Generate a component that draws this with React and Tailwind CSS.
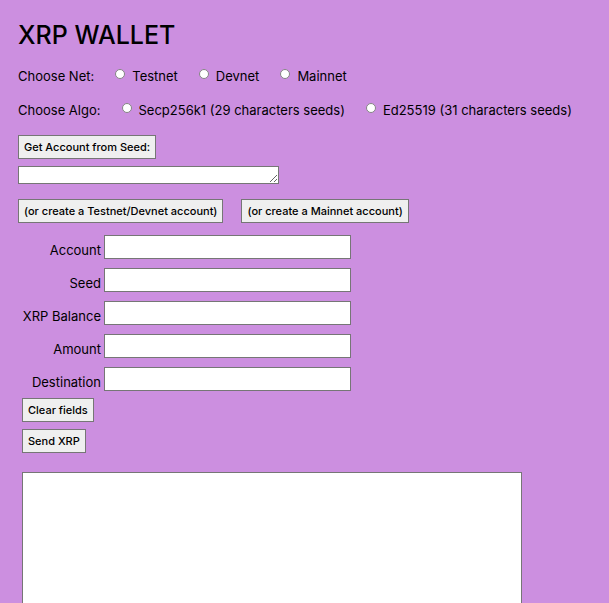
const networks = ["Testnet", "Devnet", "Mainnet"];
const algorithms = ["Secp256k1 (29 characters seeds)", "Ed25519 (31 characters seeds)"];
const fields = ["Account", "Seed", "XRP Balance", "Amount", "Destination"];

function Radio({ name, label }) {
  return (
    <label className="flex items-center gap-[7px]">
      <input
        type="radio"
        name={name}
        value={label}
        className="mb-1 size-[10px] shrink-0 appearance-none rounded-full border border-[#858585] bg-white checked:border-[3px] checked:border-[#0075ff]"
      />
      {label}
    </label>
  );
}

function RadioRow({ title, name, options }) {
  return (
    <div role="radiogroup" aria-label={title} className="flex flex-wrap items-center gap-x-[21px] leading-5">
      <span>{title}</span>
      {options.map((option) => (
        <Radio key={option} name={name} label={option} />
      ))}
    </div>
  );
}

function Button({ children }) {
  return (
    <button
      type="button"
      className="h-6 whitespace-nowrap border border-[#767676] bg-[#efefef] px-[5px] text-[11px] font-medium leading-4"
    >
      {children}
    </button>
  );
}

export default function App() {
  return (
    <main className="min-h-screen bg-[#cc8fe0] px-[18px] pt-[19px] pb-5 font-['Inter','Liberation_Sans',sans-serif] text-[13px] text-black">
      <h1 className="text-[25px] font-medium leading-8">XRP WALLET</h1>
      <div className="mt-[15px] flex flex-col gap-[14px]">
        <RadioRow title="Choose Net:" name="network" options={networks} />
        <RadioRow title="Choose Algo:" name="algorithm" options={algorithms} />
      </div>
      <div className="mt-[15px] flex flex-col items-start gap-[7px]">
        <Button>Get Account from Seed:</Button>
        <textarea
          aria-label="Account seed"
          rows={1}
          className="block h-[18px] w-[261px] border border-[#767676] bg-white px-1 text-[11px] leading-4"
        />
      </div>
      <div className="mt-[15px] flex flex-wrap gap-[18px]">
        <Button>(or create a Testnet/Devnet account)</Button>
        <Button>(or create a Mainnet account)</Button>
      </div>
      <div className="mt-3 flex flex-col gap-[9px]">
        {fields.map((field) => (
          <div key={field} className="flex h-6 items-end gap-[3px]">
            <label htmlFor={field} className="w-[83px] whitespace-nowrap text-right leading-[18px]">
              {field}
            </label>
            <input
              id={field}
              type="text"
              className="h-6 w-[247px] border border-[#767676] bg-white px-1"
            />
          </div>
        ))}
      </div>
      <div className="mt-[7px] ml-1 flex flex-col items-start gap-[7px]">
        <Button>Clear fields</Button>
        <Button>Send XRP</Button>
        <textarea
          aria-label="Results"
          rows={20}
          className="mt-3 block h-[400px] w-[500px] max-w-full border border-[#767676] bg-white p-1"
        />
      </div>
    </main>
  );
}
